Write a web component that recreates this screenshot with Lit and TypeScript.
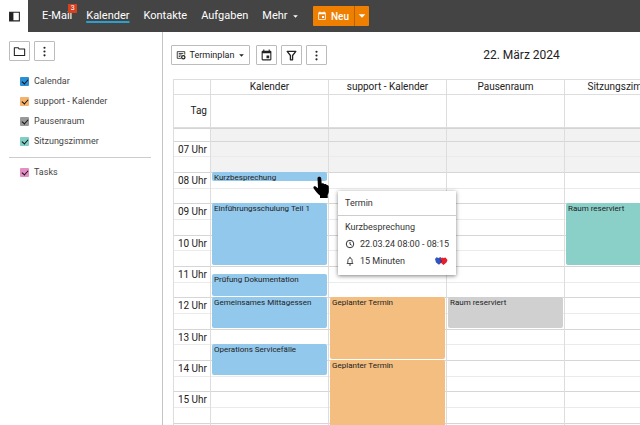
import { LitElement, html, css, svg, nothing } from "lit";
import { customElement, property } from "lit/decorators.js";
import { classMap } from "lit/directives/class-map.js";
import { styleMap } from "lit/directives/style-map.js";

type IconName = keyof typeof ICONS;

const ICONS = {
  panel: svg`<path d="M3 4h18v16H3z" fill="none" stroke="currentColor" stroke-width="2"/><path d="M3 4h7v16H3z"/>`,
  folder: svg`<path d="M2.500 5h7l2 2.500h10v12h-19z" fill="none" stroke="currentColor" stroke-width="2" stroke-linejoin="round"/>`,
  more: svg`<circle cx="12" cy="5" r="2"/><circle cx="12" cy="12" r="2"/><circle cx="12" cy="19" r="2"/>`,
  event: svg`<path d="M17 12h-5v5h5v-5zM16 1v2H8V1H6v2H5a2 2 0 0 0-2 2v14a2 2 0 0 0 2 2h14a2 2 0 0 0 2-2V5a2 2 0 0 0-2-2h-1V1h-2zm3 18H5V8h14v11z"/>`,
  filter: svg`<path d="M4 4.500h16l-6 7.500v8h-4v-8z" fill="none" stroke="currentColor" stroke-width="2.400" stroke-linejoin="round"/>`,
  plan: svg`<path d="M12 20H3V4h18v7M6.500 8.500h11M6.500 12h7M6.500 15.500h4" fill="none" stroke="currentColor" stroke-width="2"/><circle cx="17.500" cy="17.500" r="4" fill="none" stroke="currentColor" stroke-width="3"/>`,
  clock: svg`<circle cx="12" cy="12" r="9" fill="none" stroke="currentColor" stroke-width="2.400"/><path d="M12 7v5.500l4 2.500" fill="none" stroke="currentColor" stroke-width="2.400"/>`,
  bell: svg`<path d="M5 18V17l2-2v-4.500C7 7.500 9 5 12 5s5 2.500 5 5.500V15l2 2v1zM12 5V2M9.500 21.500h5" fill="none" stroke="currentColor" stroke-width="2.200"/>`,
  caret: svg`<path d="M4 8h16l-8 8z"/>`,
};

const icon = (name: IconName, size = "") =>
  html`<svg class="icon ${size}" viewBox="0 0 24 24" aria-hidden="true">${ICONS[name]}</svg>`;

const sharedStyles = css`
  * {
    box-sizing: border-box;
  }
  button {
    font: inherit;
    color: inherit;
    background: none;
    border: 0;
    padding: 0;
    margin: 0;
    display: flex;
    align-items: center;
    justify-content: center;
  }
  .icon {
    width: 13px;
    height: 13px;
    fill: currentColor;
    display: block;
    flex: none;
  }
  .icon.small {
    width: 10px;
    height: 10px;
  }
  .icon.tiny {
    width: 7px;
    height: 7px;
  }
  .tool {
    height: 20px;
    width: 21px;
    border: 1px solid #bcbcbc;
    border-radius: 1px;
    background: #fff;
    color: #222;
  }
`;

@customElement("top-bar")
class TopBar extends LitElement {
  static styles = [
    sharedStyles,
    css`
      :host {
        display: flex;
        height: 32px;
        background: #444;
        color: #fff;
        font-size: 10px;
        font-weight: 500;
      }
      .toggle {
        width: 28px;
        background: #fff;
        color: #222;
      }
      nav {
        display: flex;
        align-items: center;
        gap: 14px;
        padding: 0 14px 0 14px;
        font-size: 11px;
        font-weight: 400;
      }
      a {
        color: inherit;
        text-decoration: none;
        position: relative;
        line-height: 12px;
      }
      a.active {
        text-decoration: underline 2px #2b9fd0;
        text-underline-offset: 2px;
      }
      .badge {
        position: absolute;
        right: -5px;
        top: -6px;
        width: 9px;
        height: 9px;
        background: #d4411f;
        font-size: 7px;
        line-height: 9px;
        text-align: center;
      }
      .more {
        gap: 4px;
        line-height: 12px;
      }
      .new {
        display: flex;
        align-self: center;
        height: 20px;
        background: #ee7f01;
        border-radius: 1px;
      }
      .create {
        gap: 4px;
        width: 41px;
      }
      .menu {
        width: 15px;
        border-left: 1px solid #b86200;
      }
    `,
  ];

  render() {
    return html`
      <button class="toggle" aria-label="Seitenleiste">${icon("panel")}</button>
      <nav>
        <a href="#mail">E-Mail<span class="badge">3</span></a>
        <a href="#kalender" class="active">Kalender</a>
        <a href="#kontakte">Kontakte</a>
        <a href="#aufgaben">Aufgaben</a>
        <button class="more">Mehr ${icon("caret", "tiny")}</button>
      </nav>
      <div class="new">
        <button class="create">${icon("event", "small")} Neu</button>
        <button class="menu" aria-label="Weitere Optionen">${icon("caret", "small")}</button>
      </div>
    `;
  }
}

@customElement("side-bar")
class SideBar extends LitElement {
  static styles = [
    sharedStyles,
    css`
      :host {
        display: block;
        box-sizing: border-box;
        width: 163px;
        flex: none;
        padding: 9px 11px 0 9px;
        border-right: 1px solid #c4c4c4;
        font-size: 9px;
        color: #444;
      }
      .tools {
        display: flex;
        gap: 4px;
        margin-bottom: 10px;
      }
      label {
        display: flex;
        align-items: center;
        gap: 5px;
        height: 20px;
        padding-left: 11px;
      }
      input {
        appearance: none;
        width: 9px;
        height: 9px;
        margin: 0;
        border-radius: 1px;
        display: grid;
        place-items: center;
      }
      input:checked::after {
        content: "";
        width: 5px;
        height: 3px;
        border: solid #111;
        border-width: 0 0 1px 1px;
        transform: rotate(-48deg);
      }
      .blue {
        background: #2a8fd5;
      }
      .orange {
        background: #f5b26b;
      }
      .gray {
        background: #999;
      }
      .teal {
        background: #7fcfc5;
      }
      .pink {
        background: #e48fc4;
      }
      hr {
        border: 0;
        border-top: 1px solid #ccc;
        margin: 6px 0 4px;
      }
    `,
  ];

  private entry(name: string, color: string) {
    return html`<label><input type="checkbox" class=${color} checked />${name}</label>`;
  }

  render() {
    return html`
      <div class="tools">
        <button class="tool" aria-label="Ordner">${icon("folder")}</button>
        <button class="tool" aria-label="Mehr">${icon("more")}</button>
      </div>
      ${this.entry("Calendar", "blue")} ${this.entry("support - Kalender", "orange")}
      ${this.entry("Pausenraum", "gray")} ${this.entry("Sitzungszimmer", "teal")}
      <hr />
      ${this.entry("Tasks", "pink")}
    `;
  }
}

@customElement("event-popup")
class EventPopup extends LitElement {
  static styles = [
    sharedStyles,
    css`
      :host {
        display: block;
        width: 118px;
        background: #fff;
        box-shadow: 0 1px 4px rgba(0, 0, 0, 0.5);
        font-size: 9px;
        color: #333;
      }
      .title {
        padding: 0 7px;
        line-height: 24px;
        border-bottom: 1px solid #ccc;
      }
      .content {
        padding: 2px 6px 6px 7px;
      }
      .row {
        display: flex;
        align-items: center;
        height: 17px;
        gap: 5px;
        white-space: nowrap;
      }
      .tags {
        width: 14px;
        height: 10px;
        margin-left: auto;
        margin-right: 2px;
      }
    `,
  ];

  render() {
    return html`
      <div class="title">Termin</div>
      <div class="content">
        <div class="row">Kurzbesprechung</div>
        <div class="row">${icon("clock", "small")}<span>22.03.24 08:00 - 08:15</span></div>
        <div class="row">
          ${icon("bell", "small")}<span>15 Minuten</span>
          <svg class="tags" viewBox="0 0 14 10" aria-hidden="true">
            <path d="M1 3 2.500 1.200 4.500 2l2-1 1.500 2v3L5 8.800 2 6.500z" fill="#2e55c4" />
            <path d="m6 3.500 2-2 1.500.5 2-.5L13.500 4l-1 2.500L9.500 9 6.500 6.500z" fill="#e3202b" />
            <path d="m6 3.500 1.500 1.500-1 1.500" fill="none" stroke="#17307c" />
          </svg>
        </div>
      </div>
    `;
  }
}

interface Appointment {
  title: string;
  from: number;
  to: number;
  open?: boolean;
}

interface Resource {
  name: string;
  color: string;
  items: Appointment[];
}

const DAY_START = 6.5;
const DAY_END = 18.5;
const WORK_START = 8;

const RESOURCES: Resource[] = [
  {
    name: "Kalender",
    color: "blue",
    items: [
      { title: "Kurzbesprechung", from: 8, to: 8.25, open: true },
      { title: "Einführungsschulung Teil 1", from: 9, to: 11 },
      { title: "Prüfung Dokumentation", from: 11.25, to: 12 },
      { title: "Gemeinsames Mittagessen", from: 12, to: 13 },
      { title: "Operations Servicefälle", from: 13.5, to: 14.5 },
    ],
  },
  {
    name: "support - Kalender",
    color: "orange",
    items: [
      { title: "Geplanter Termin", from: 12, to: 14 },
      { title: "Geplanter Termin", from: 14, to: 17 },
    ],
  },
  { name: "Pausenraum", color: "gray", items: [{ title: "Raum reserviert", from: 12, to: 13 }] },
  { name: "Sitzungszimmer", color: "teal", items: [{ title: "Raum reserviert", from: 9, to: 11 }] },
];

const gridRow = (from: number, to: number) => ({
  gridRow: `${(from - DAY_START) * 4 + 1} / ${(to - DAY_START) * 4 + 1}`,
});

@customElement("day-plan")
class DayPlan extends LitElement {
  @property({ attribute: false }) resources: Resource[] = [];

  static styles = [
    sharedStyles,
    css`
      :host {
        display: flex;
        flex-direction: column;
        flex: 1;
        min-height: 0;
        overflow: hidden;
        border-top: 1px solid #ddd;
        border-left: 1px solid #ddd;
        color: #222;
        font-size: 10px;
      }
      .head,
      .body {
        display: grid;
        grid-template-columns: 37px repeat(4, minmax(118px, 1fr));
      }
      .head {
        flex: none;
        grid-template-rows: 15px 33px;
        border-bottom: 1px solid #d4d4d4;
      }
      .head > * {
        border-right: 1px solid #ddd;
        border-bottom: 1px solid #ddd;
        text-align: center;
        line-height: 14px;
      }
      .head > .allday {
        text-align: right;
        line-height: 32px;
        padding-right: 3px;
      }
      .scroll {
        flex: 1;
        min-height: 0;
        overflow: hidden;
      }
      .body {
        height: 376px;
        grid-template-rows: 100%;
        margin-top: -4px;
      }
      .lane {
        display: grid;
        grid-template-rows: repeat(48, minmax(0, 1fr));
        grid-template-columns: minmax(0, 1fr);
        border-right: 1px solid #ddd;
        position: relative;
      }
      .slot {
        grid-column: 1;
        border-top: 1px solid #ebebeb;
      }
      .slot.hour {
        border-color: #d6d6d6;
      }
      .slot.off {
        background: #f2f2f2;
      }
      .time {
        grid-column: 1;
        text-align: right;
        padding-right: 3px;
        line-height: 18px;
      }
      .event {
        grid-column: 1;
        margin: 0 1px 1px;
        min-height: 9px;
        padding: 0 2px;
        border-radius: 2px;
        overflow: hidden;
        white-space: nowrap;
        font-size: 8px;
        line-height: 12px;
      }
      .blue {
        background: #92c8ec;
      }
      .orange {
        background: #f3be80;
      }
      .gray {
        background: #d0d0d0;
      }
      .teal {
        background: #8ad0c8;
      }
      event-popup {
        position: absolute;
        z-index: 2;
        left: 127px;
        top: 66px;
      }
      .pointer {
        position: absolute;
        z-index: 3;
        left: 102px;
        top: 51px;
        width: 16px;
        height: 23px;
      }
    `,
  ];

  private slots(shade: boolean) {
    const starts = Array.from({ length: (DAY_END - DAY_START) * 2 }, (_, i) => DAY_START + i / 2);
    return starts.map(
      (at) => html`<div
        class=${classMap({ slot: true, hour: at % 1 === 0, off: shade && at < WORK_START })}
        style=${styleMap(gridRow(at, at + 0.5))}
      ></div>`
    );
  }

  private hours() {
    const hours = Array.from({ length: 12 }, (_, i) => i + 7);
    return hours.map(
      (h) => html`<div class="time" style=${styleMap(gridRow(h, h + 0.5))}>
        ${String(h).padStart(2, "0")} Uhr
      </div>`
    );
  }

  private lane(r: Resource) {
    return html`<div class="lane">
      ${this.slots(true)}
      ${r.items.map(
        (e) => html`<div class="event ${r.color}" style=${styleMap(gridRow(e.from, e.to))}>${e.title}</div>
          ${e.open
            ? html`<event-popup></event-popup>
                <svg class="pointer" viewBox="0 0 16 23" aria-hidden="true">
                  <path
                    d="M4.500 2.200C4.500.2 8 .2 8.200 2.200L8.700 7.500c1-.6 2.300-.3 2.700.8 1-.5 2-.1 2.300.8 1.200-.2 2 .6 2.100 1.700v4.700c0 1.500-.8 2.500-1.100 3.500V22H7v-2.500C5 18 2.500 15 .7 12.500-.3 10.800 1.500 9.500 3 10.700l2 1.500z"
                  />
                </svg>`
            : nothing}`
      )}
    </div>`;
  }

  render() {
    return html`
      <div class="head">
        <div></div>
        ${this.resources.map((r) => html`<div>${r.name}</div>`)}
        <div class="allday">Tag</div>
        ${this.resources.map(() => html`<div></div>`)}
      </div>
      <div class="scroll">
        <div class="body">
          <div class="lane">${this.slots(false)} ${this.hours()}</div>
          ${this.resources.map((r) => this.lane(r))}
        </div>
      </div>
    `;
  }
}

@customElement("app-root")
class AppRoot extends LitElement {
  static styles = [
    sharedStyles,
    css`
      :host {
        display: flex;
        flex-direction: column;
        height: 100vh;
        overflow: hidden;
        background: #fff;
        font-family: Roboto, "Liberation Sans", sans-serif;
      }
      .page {
        display: flex;
        flex: 1;
        min-height: 0;
      }
      main {
        flex: 1;
        min-width: 0;
        display: flex;
        flex-direction: column;
        padding-left: 10px;
      }
      .toolbar {
        display: flex;
        align-items: center;
        gap: 6px;
        height: 47px;
        padding-bottom: 1px;
        margin-left: -2px;
        font-size: 9px;
        color: #222;
      }
      .tool.view {
        width: 79px;
        gap: 4px;
      }
      .group {
        display: flex;
        gap: 4px;
      }
      h1 {
        flex: 1;
        margin: 0;
        padding-left: 70px;
        text-align: center;
        font-size: 12px;
        font-weight: 400;
      }
    `,
  ];

  render() {
    return html`
      <top-bar></top-bar>
      <div class="page">
        <side-bar></side-bar>
        <main>
          <div class="toolbar">
            <button class="tool view">${icon("plan", "small")} Terminplan ${icon("caret", "tiny")}</button>
            <div class="group">
              <button class="tool" aria-label="Heute">${icon("event")}</button>
              <button class="tool" aria-label="Filter">${icon("filter")}</button>
              <button class="tool" aria-label="Mehr">${icon("more")}</button>
            </div>
            <h1>22. März 2024</h1>
          </div>
          <day-plan .resources=${RESOURCES}></day-plan>
        </main>
      </div>
    `;
  }
}
